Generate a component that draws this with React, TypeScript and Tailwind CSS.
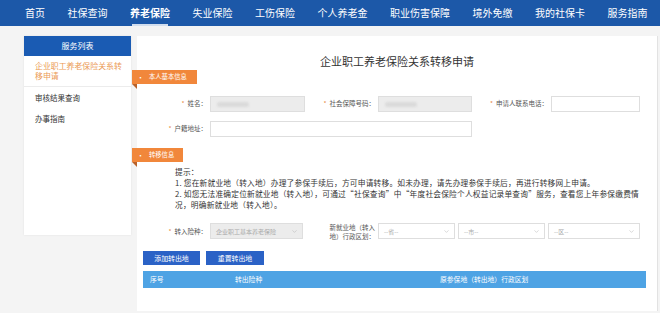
import { ChevronDown } from "lucide-react";

const NAV = ["首页", "社保查询", "养老保险", "失业保险", "工伤保险", "个人养老金", "职业伤害保障", "境外免缴", "我的社保卡", "服务指南"];

function Tag({ text, w }: { text: string; w: string }) {
  return (
    <div className={`relative -ml-[5px] flex h-[14px] items-center bg-[#f1873b] pl-[5px] text-[6.3px] text-white ${w}`}>
      <span className="mr-[5px] text-[7px]">•</span>
      {text}
      <span className="absolute left-0 top-full h-0 w-0 border-l-[5px] border-t-[5px] border-l-transparent border-t-[#b9622a]" />
    </div>
  );
}

function Label({ text, w, star = true }: { text: string; w: string; star?: boolean }) {
  return (
    <div className={`flex shrink-0 items-center justify-end pr-[3px] text-[6.5px] text-[#555] ${w}`}>
      {star && <span className="mr-[3px] text-[#e8863e]">*</span>}
      {text}：
    </div>
  );
}

function Input({ w, disabled = false }: { w: string; disabled?: boolean }) {
  return (
    <div className={`flex h-[16px] shrink-0 items-center border border-[#dedede] px-[6px] ${disabled ? "bg-[#ececec]" : "bg-white"} ${w}`}>
      {disabled && <div className="h-[5px] w-[40%] rounded-sm bg-[#dadada] blur-[1px]" />}
    </div>
  );
}

function Select({ w, text, disabled = false }: { w: string; text: string; disabled?: boolean }) {
  return (
    <div className={`flex h-[16px] shrink-0 items-center justify-between border border-[#dedede] pl-[5px] pr-[4px] text-[6px] text-[#aaa] ${disabled ? "bg-[#ececec]" : "bg-white"} ${w}`}>
      <span>{text}</span>
      <ChevronDown size={7} strokeWidth={1.5} className="text-[#aaa]" />
    </div>
  );
}

// full-width looking quotes
const L = () => <span className="inline-block w-[8px] text-right">“</span>;
const R = () => <span className="inline-block w-[8px] text-left">”</span>;

export default function App() {
  return (
    <div className="h-[313px] w-[660px] overflow-hidden bg-[#f4f4f4] font-['Noto_Sans_CJK_SC','Noto_Sans',sans-serif]">
      {/* top nav */}
      <div className="flex h-[26px] items-stretch gap-[22.5px] bg-[#1c58a8] pl-[25px]">
        {NAV.map(n => (
          <div key={n} className="relative flex items-center text-[10px] leading-none text-white">
            <span className={n === "养老保险" ? "font-bold" : ""}>{n}</span>
            {n === "养老保险" && <span className="absolute bottom-0 left-[2px] right-[2px] h-[2px] bg-white/80" />}
          </div>
        ))}
      </div>

      <div className="flex gap-[6px] pl-[24px] pt-[10px]">
        {/* sidebar */}
        <div className="h-[199px] w-[107px] shrink-0 bg-white shadow-[0_0_2px_rgba(0,0,0,0.08)]">
          <div className="flex h-[20px] items-center justify-center bg-[#1a5bb3] text-[8px] text-white">服务列表</div>
          <div className="border-b border-[#ececec] pb-[5px] pl-[11px] pt-[5px]">
            <div className="w-[89px] text-[7.9px] leading-[10px] text-[#eb9a55]">企业职工养老保险关系转<br />移申请</div>
          </div>
          <div className="pl-[11px] pt-[6px] text-[7.5px] leading-[10px] text-[#333]">审核结果查询</div>
          <div className="pl-[11px] pt-[11px] text-[7.5px] leading-[10px] text-[#333]">办事指南</div>
        </div>

        {/* main panel */}
        <div className="h-[275px] w-[521px] shrink-0 border-r border-[#e2e2e2] bg-white pt-[2px]">
          <div className="mt-[16px] h-[14px] text-center text-[11px] leading-[14px] text-[#333]">企业职工养老保险关系转移申请</div>

          <div className="mt-[2px]"><Tag text="本人基本信息" w="w-[65px]" /></div>

          <div className="mt-[12px] flex">
            <Label text="姓名" w="w-[73px]" />
            <Input w="w-[95px]" disabled />
            <Label text="社会保障号码" w="w-[73px]" />
            <Input w="w-[94px]" disabled />
            <Label text="申请人联系电话" w="w-[79px]" />
            <Input w="w-[89px]" />
          </div>

          <div className="mt-[9px] flex">
            <Label text="户籍地址" w="w-[73px]" />
            <Input w="w-[262px]" />
          </div>

          <div className="mt-[11px]"><Tag text="转移信息" w="w-[51px]" /></div>

          <div className="mt-[4px] pl-[38px] text-[7.7px] leading-[11px] tracking-[0.22px] whitespace-nowrap text-[#333]">
            <div>提示：</div>
            <div>1. 您在新就业地（转入地）办理了参保手续后，方可申请转移。如未办理，请先办理参保手续后，再进行转移网上申请。</div>
            <div>2. 如您无法准确定位新就业地（转入地），可通过<L />社保查询<R />中<L />年度社会保险个人权益记录单查询<R />服务，查看您上年参保缴费情</div>
            <div>况，明确新就业地（转入地）。</div>
          </div>

          <div className="mt-[13px] flex">
            <Label text="转入险种" w="w-[73px]" />
            <Select w="w-[93px]" text="企业职工基本养老保险" disabled />
            <div className="flex w-[75px] shrink-0 flex-col items-end justify-center pr-[3px] text-right text-[6.5px] leading-[9px] text-[#555]">
              <span>新就业地（转入</span>
              <span>地）行政区划：</span>
            </div>
            <div className="flex gap-[3px]">
              <Select w="w-[77px]" text="--省--" />
              <Select w="w-[87px]" text="--市--" />
              <Select w="w-[92px]" text="--区--" />
            </div>
          </div>

          <div className="ml-[6px] mt-[10px] flex gap-[6px]">
            <button className="flex h-[14px] w-[57px] items-center justify-center bg-[#2b62c6] text-[6.9px] text-white">添加转出地</button>
            <button className="flex h-[14px] w-[58px] items-center justify-center bg-[#2b62c6] text-[6.9px] text-white">重置转出地</button>
          </div>

          <div className="ml-[6px] mt-[6px] flex h-[17px] w-[503px] items-center bg-[#4ea3e4] text-[6.8px] text-white">
            <span className="w-[92px] pl-[7px]">序号</span>
            <span className="w-[205px]">转出险种</span>
            <span>原参保地（转出地）行政区划</span>
          </div>
        </div>
      </div>
    </div>
  );
}
